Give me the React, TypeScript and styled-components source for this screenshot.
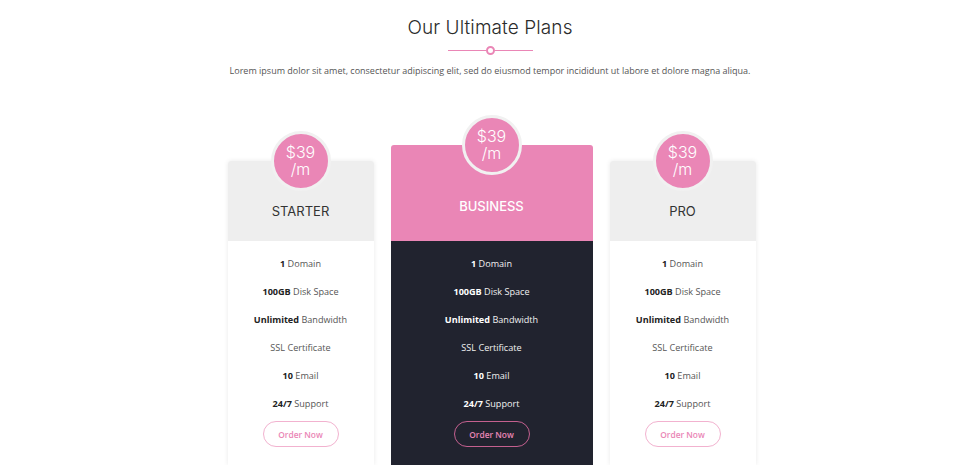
import React from 'react';
import styled, {createGlobalStyle} from 'styled-components';

const GlobalStyle = createGlobalStyle`
  body {
    margin: 0;
    background: #ffffff;
    font-family: 'Open Sans', 'Noto Sans', sans-serif;
  }
`;

const PINK = '#ea86b6';
const DARK = '#21232f';

interface Plan {
  name: string;
  price: string;
  featured?: boolean;
}

const plans: Plan[] = [
  {name: 'STARTER', price: '$39\n/m'},
  {name: 'BUSINESS', price: '$39\n/m', featured: true},
  {name: 'PRO', price: '$39\n/m'},
];

const features: [string, string][] = [
  ['1', 'Domain'],
  ['100GB', 'Disk Space'],
  ['Unlimited', 'Bandwidth'],
  ['', 'SSL Certificate'],
  ['10', 'Email'],
  ['24/7', 'Support'],
];

const App = () => {
  return (
    <Section>
      <GlobalStyle />
      <Heading>Our Ultimate Plans</Heading>
      <Divider>
        <DividerLine />
        <DividerDot />
        <DividerLine />
      </Divider>
      <Intro>
        Lorem ipsum dolor sit amet, consectetur adipiscing elit, sed do eiusmod tempor incididunt ut labore et dolore
        magna aliqua.
      </Intro>

      <Cards>
        {plans.map((plan) => (
          <Card key={plan.name} $featured={!!plan.featured}>
            <CardHeader $featured={!!plan.featured}>
              <Price>{plan.price}</Price>
              <PlanName $featured={!!plan.featured}>{plan.name}</PlanName>
            </CardHeader>
            <CardBody $featured={!!plan.featured}>
              {features.map(([bold, rest]) => (
                <Feature key={rest} $featured={!!plan.featured}>
                  {bold && <strong>{bold}</strong>}
                  {bold ? ' ' : ''}
                  {rest}
                </Feature>
              ))}
              <OrderButton $featured={!!plan.featured}>Order Now</OrderButton>
            </CardBody>
          </Card>
        ))}
      </Cards>
    </Section>
  );
};

const Section = styled.section`
  display: flex;
  flex-direction: column;
  align-items: center;
  padding-top: 16px;
`;

const Heading = styled.h2`
  margin: 0;
  font-family: 'Inter', 'Lato', sans-serif;
  font-weight: 300;
  font-size: 19px;
  line-height: 24px;
  color: #2b2b2b;
  letter-spacing: 0.1px;
`;

const Divider = styled.div`
  display: flex;
  align-items: center;
  margin-top: 6px;
  height: 8px;
`;

const DividerLine = styled.span`
  width: 38px;
  height: 1px;
  background: ${PINK};
`;

const DividerDot = styled.span`
  width: 5px;
  height: 5px;
  border: 2px solid ${PINK};
  border-radius: 50%;
  background: #fff;
`;

const Intro = styled.p`
  margin: 10px 0 0;
  font-size: 9px;
  line-height: 14px;
  color: #555;
`;

const Cards = styled.div`
  display: flex;
  align-items: flex-end;
  gap: 17px;
  margin-top: 67px;
  margin-left: 3px;
`;

const Card = styled.div<{$featured: boolean}>`
  width: ${(p) => (p.$featured ? 202 : 146)}px;
  display: flex;
  flex-direction: column;
  border-radius: 3px 3px 0 0;
  box-shadow: ${(p) => (p.$featured ? 'none' : '0 0 5px rgba(0, 0, 0, 0.09)')};
`;

const CardHeader = styled.div<{$featured: boolean}>`
  position: relative;
  height: ${(p) => (p.$featured ? 96 : 80)}px;
  background: ${(p) => (p.$featured ? PINK : '#eeeeee')};
  border-radius: 3px 3px 0 0;
  display: flex;
  align-items: flex-end;
  justify-content: center;
`;

const Price = styled.div`
  position: absolute;
  top: -30px;
  left: 50%;
  transform: translateX(-50%);
  width: 54px;
  height: 54px;
  border: 3px solid #f1f1f1;
  border-radius: 50%;
  background: ${PINK};
  color: #fff;
  font-family: 'Inter', 'Lato', sans-serif;
  font-weight: 300;
  font-size: 16px;
  line-height: 17px;
  white-space: pre-line;
  display: flex;
  align-items: center;
  justify-content: center;
  text-align: center;
`;

const PlanName = styled.h3<{$featured: boolean}>`
  margin: 0 0 ${(p) => (p.$featured ? 27 : 22)}px;
  font-family: 'Inter', 'Lato', sans-serif;
  font-weight: ${(p) => (p.$featured ? 500 : 400)};
  font-size: 13px;
  line-height: 16px;
  color: ${(p) => (p.$featured ? '#fff' : '#333')};
`;

const CardBody = styled.div<{$featured: boolean}>`
  background: ${(p) => (p.$featured ? DARK : '#fff')};
  height: 224px;
  box-sizing: border-box;
  padding-top: 9px;
  display: flex;
  flex-direction: column;
  align-items: center;
`;

const Feature = styled.div<{$featured: boolean}>`
  height: 28px;
  line-height: 28px;
  font-size: 9.1px;
  color: ${(p) => (p.$featured ? '#f1f1f1' : '#555')};

  strong {
    font-weight: 700;
    color: ${(p) => (p.$featured ? '#fff' : '#222')};
  }
`;

const OrderButton = styled.button<{$featured: boolean}>`
  margin-top: 3px;
  width: 76px;
  height: 26px;
  border-radius: 13px;
  border: 1px solid ${(p) => (p.$featured ? '#c4608f' : '#f2b2cf')};
  background: transparent;
  color: ${PINK};
  font-family: 'Open Sans', sans-serif;
  font-size: 8.4px;
  font-weight: 600;
  padding: 0;
`;

export default App;
